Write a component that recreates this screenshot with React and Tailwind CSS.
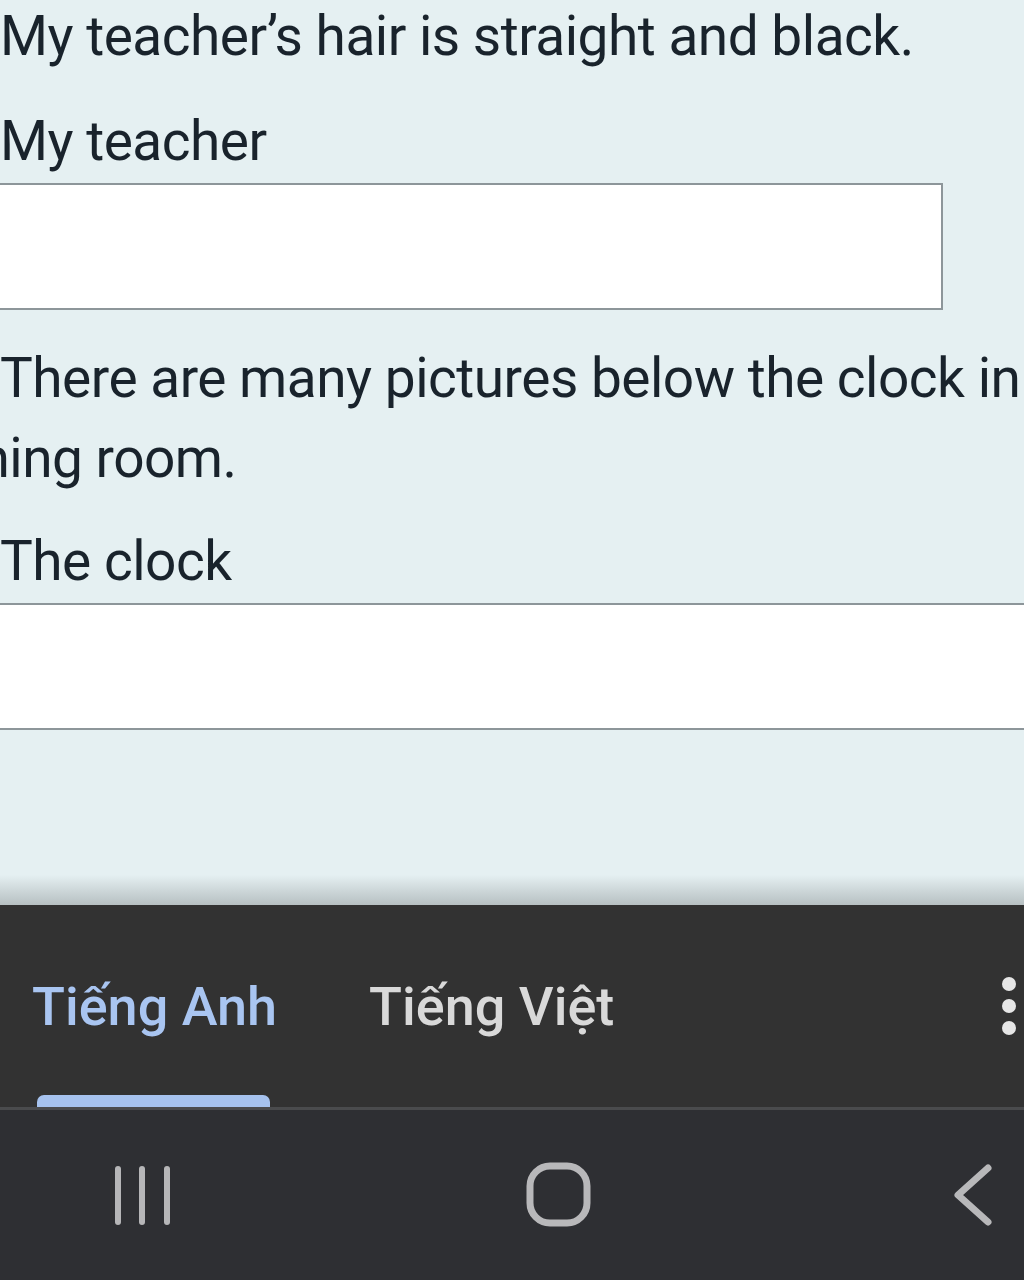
import React from 'react';

const font = { fontFamily: 'Roboto, "Noto Sans", sans-serif' };

function AnswerLine({ children, className = '' }) {
  return (
    <p className={`whitespace-nowrap text-[55px] leading-[80px] tracking-[-0.5px] text-[#19232c] ${className}`}>
      {children}
    </p>
  );
}

function NavBar() {
  return (
    <div className="flex h-[170px] items-center bg-[#2e2f33] pl-[114px]">
      {/* recents */}
      <svg width="58" height="60" viewBox="0 0 58 60">
        <g stroke="#b6b6b8" strokeWidth="6" strokeLinecap="round">
          <line x1="4" y1="4" x2="4" y2="57" />
          <line x1="28" y1="4" x2="28" y2="57" />
          <line x1="53" y1="4" x2="53" y2="57" />
        </g>
      </svg>
      {/* home */}
      <svg width="66" height="66" viewBox="0 0 66 66" className="ml-[354px]">
        <rect x="4" y="4" width="57" height="57" rx="20" fill="none" stroke="#b8b8ba" strokeWidth="7" />
      </svg>
      {/* back */}
      <svg width="42" height="64" viewBox="0 0 42 64" className="ml-[360px]">
        <polyline points="36,5 6,32 36,59" fill="none" stroke="#b8b8ba" strokeWidth="7" strokeLinecap="round" strokeLinejoin="round" />
      </svg>
    </div>
  );
}

export default function App() {
  return (
    <div className="h-[1280px] w-[1024px] overflow-hidden bg-[#e5f0f2]" style={font}>
      {/* question content */}
      <div className="relative h-[905px] overflow-hidden">
        <div className="-mt-1">
          <AnswerLine>My teacher’s hair is straight and black.</AnswerLine>
          <AnswerLine className="mt-[25px]">My teacher</AnswerLine>
          <div className="mt-[2px] -ml-[10px] h-[127px] w-[953px] border-2 border-[#8d969a] bg-white" />
          <AnswerLine className="mt-[28px]">There are many pictures below the clock in</AnswerLine>
          <AnswerLine className="-ml-[64px]">dining room.</AnswerLine>
          <AnswerLine className="mt-[23px]">The clock</AnswerLine>
          <div className="mt-[2px] -mx-[10px] h-[127px] border-y-2 border-[#8d969a] bg-white" />
        </div>
        <div className="absolute bottom-0 left-0 right-0 h-[30px] bg-gradient-to-b from-[#e5f0f2] to-[#b7c0c2]" />
      </div>

      {/* translation tabs */}
      <div className="relative flex h-[202px] items-center bg-[#323232]">
        <div className="flex items-center gap-[92px] pl-[32px] text-[54px] font-medium">
          <span className="text-[#a9c5f1]">Tiếng Anh</span>
          <span className="text-[#d9d9d9]">Tiếng Việt</span>
        </div>
        <div className="ml-auto mr-[8px] flex flex-col gap-[8px]">
          <span className="block h-[14px] w-[14px] rounded-full bg-[#e6e6e6]" />
          <span className="block h-[14px] w-[14px] rounded-full bg-[#e6e6e6]" />
          <span className="block h-[14px] w-[14px] rounded-full bg-[#e6e6e6]" />
        </div>
        <div className="absolute bottom-0 left-[37px] h-[12px] w-[233px] rounded-t-[7px] bg-[#a6c2ee]" />
      </div>
      <div className="h-[3px] bg-[#4a4b4d]" />

      <NavBar />
    </div>
  );
}
